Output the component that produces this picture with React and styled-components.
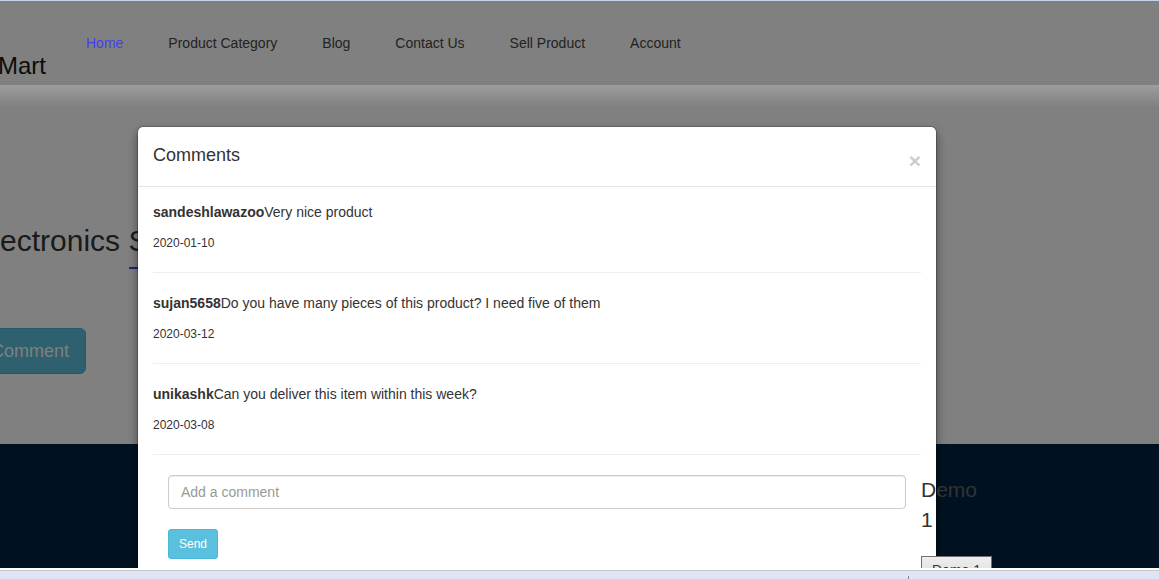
import React from "react";
import styled, { createGlobalStyle } from "styled-components";

const GlobalStyle = createGlobalStyle`
  *, *::before, *::after { box-sizing: border-box; }
  body {
    margin: 0;
    background: #fff;
    color: #333;
    font: 14px/20px "Liberation Sans", Arial, sans-serif;
  }
  h1, h2, h3, p, ul { margin: 0; padding: 0; font-weight: 400; }
  button, input { font-family: inherit; }
`;

const Window = styled.div`
  display: flex;
  flex-direction: column;
  height: 100vh;
  border-top: 1px solid #c3d5ea;
  overflow: hidden;
`;

const Viewport = styled.div`
  position: relative;
  flex: 1;
  display: flex;
  flex-direction: column;
  min-height: 0;
  overflow: hidden;
  background: #808080;
`;

const StatusStrip = styled.div`
  display: flex;
  flex: none;
  height: 11px;
  padding-top: 6px;
  padding-right: 250px;
  justify-content: flex-end;
  border-top: 2px solid #fff;
  background: #e0e5f5;
  box-shadow: inset 0 1px 0 #c6c6c8;
`;

const StripMark = styled.span`
  width: 1px;
  background: #85858c;
`;

const Header = styled.header`
  display: flex;
  flex: none;
  align-items: flex-start;
  height: 84px;
`;

const Brand = styled.a`
  flex: none;
  margin-left: -2px;
  padding: 48px 40px 0 0;
  color: #0c0c0c;
  font-size: 24px;
  line-height: 34px;
  text-decoration: none;
`;

const NavList = styled.ul`
  display: flex;
  gap: 45px;
  padding-top: 32px;
  list-style: none;
  white-space: nowrap;
`;

const NavLink = styled.a`
  color: ${(p) => (p.$active ? "#4141f2" : "#222")};
  text-decoration: none;
`;

const Main = styled.main`
  flex: none;
  padding: 139px 0 70px;
  background: linear-gradient(#9d9d9d, #808080 22px);
`;

const SectionTitle = styled.h1`
  color: #1a1a1a;
  font-size: 30px;
  line-height: 34px;

  &::after {
    content: "";
    display: block;
    width: 60px;
    height: 2px;
    margin: 9px 0 59px 129px;
    background: #1c2480;
  }
`;

const CommentButton = styled.button`
  display: block;
  margin-left: -26px;
  padding: 10px 16px;
  border: 1px solid #235b6d;
  border-radius: 6px;
  background: #2e6070;
  color: #808080;
  font-size: 18px;
  line-height: 24px;
`;

const Footer = styled.footer`
  flex: 1;
  background: #001222;
`;

const ModalLayer = styled.div`
  position: absolute;
  inset: 0;
  padding: 125px 16px 0 137px;
  overflow: hidden;
`;

const Modal = styled.section`
  max-width: 800px;
  border: 1px solid rgba(0, 0, 0, 0.2);
  border-radius: 6px;
  background: #fff;
  background-clip: padding-box;
  box-shadow: 0 5px 10px rgba(0, 0, 0, 0.4);
`;

const ModalHeader = styled.div`
  display: flex;
  justify-content: space-between;
  align-items: flex-start;
  padding: 15px 15px 14px;
  border-bottom: 1px solid #e5e5e5;
`;

const ModalTitle = styled.h2`
  font-size: 18px;
  line-height: 26px;
`;

const CloseButton = styled.button`
  height: 22px;
  margin-top: 8px;
  padding: 0;
  border: 0;
  background: none;
  color: #ccc;
  font-size: 21px;
  font-weight: 700;
  line-height: 22px;
`;

const ModalBody = styled.div`
  padding: 15px 15px 40px;
`;

const Comment = styled.article`
  margin-bottom: 20px;
  padding-bottom: 19px;
  border-bottom: 1px solid #eee;
`;

const CommentDate = styled.time`
  display: block;
  margin-top: 11px;
  font-size: 12px;
`;

const CommentForm = styled.form`
  position: relative;
  padding: 0 15px;
`;

const CommentInput = styled.input`
  display: block;
  width: 100%;
  height: 34px;
  margin-bottom: 20px;
  padding: 6px 12px;
  border: 1px solid #ccc;
  border-radius: 4px;
  box-shadow: inset 0 1px 1px rgba(0, 0, 0, 0.08);
  color: #555;
  font-size: 14px;

  &::placeholder { color: #999; opacity: 1; }
`;

const SendButton = styled.button`
  height: 30px;
  padding: 0 10px;
  border: 1px solid #46b8da;
  border-radius: 3px;
  background: #5bc0de;
  color: #fff;
  font-size: 12px;
  line-height: 18px;
`;

const Demo = styled.aside`
  position: absolute;
  top: 0;
  left: 100%;
  width: 71px;
`;

const DemoTitle = styled.h3`
  width: min-content;
  margin-bottom: 21px;
  font-size: 21px;
  line-height: 30px;
`;

const DemoButton = styled.button`
  width: 100%;
  height: 28px;
  padding: 0;
  border: 1px solid #707070;
  background: linear-gradient(#eee, #dadada);
  color: #333;
  font-size: 14px;
  line-height: 20px;
`;

const links = ["Home", "Product Category", "Blog", "Contact Us", "Sell Product", "Account"];

const comments = [
  { user: "sandeshlawazoo", text: "Very nice product", date: "2020-01-10" },
  {
    user: "sujan5658",
    text: "Do you have many pieces of this product? I need five of them",
    date: "2020-03-12",
  },
  { user: "unikashk", text: "Can you deliver this item within this week?", date: "2020-03-08" },
];

export default function App() {
  return (
    <>
      <GlobalStyle />
      <Window>
        <Viewport>
          <Header>
            <Brand href="#">Mart</Brand>
            <nav>
              <NavList>
                {links.map((label, i) => (
                  <li key={label}>
                    <NavLink href="#" $active={i === 0}>{label}</NavLink>
                  </li>
                ))}
              </NavList>
            </nav>
          </Header>
          <Main>
            <SectionTitle>ectronics S</SectionTitle>
            <CommentButton type="button">Comment</CommentButton>
          </Main>
          <Footer />
          <ModalLayer>
            <Modal role="dialog" aria-labelledby="comments-title">
              <ModalHeader>
                <ModalTitle id="comments-title">Comments</ModalTitle>
                <CloseButton type="button" aria-label="Close">×</CloseButton>
              </ModalHeader>
              <ModalBody>
                {comments.map((c) => (
                  <Comment key={c.user}>
                    <p><strong>{c.user}</strong>{c.text}</p>
                    <CommentDate dateTime={c.date}>{c.date}</CommentDate>
                  </Comment>
                ))}
                <CommentForm onSubmit={(e) => e.preventDefault()}>
                  <CommentInput type="text" aria-label="Add a comment" placeholder="Add a comment" />
                  <SendButton type="submit">Send</SendButton>
                  <Demo>
                    <DemoTitle>Demo 1</DemoTitle>
                    <DemoButton type="button">Demo 1</DemoButton>
                  </Demo>
                </CommentForm>
              </ModalBody>
            </Modal>
          </ModalLayer>
        </Viewport>
        <StatusStrip>
          <StripMark />
        </StatusStrip>
      </Window>
    </>
  );
}
